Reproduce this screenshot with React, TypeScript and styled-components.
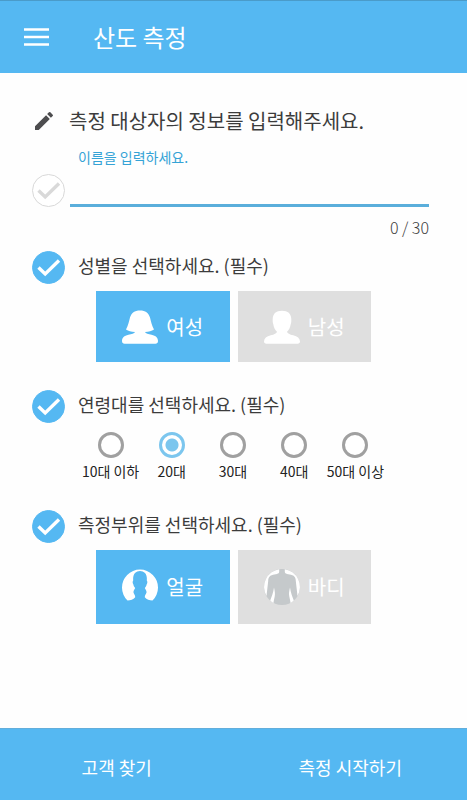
import React, { useState } from "react";
import styled, { createGlobalStyle } from "styled-components";

const BLUE = "#55b8f2";
const GREY = "#dfdfdf";

const GlobalStyle = createGlobalStyle`
  * { box-sizing: border-box; }
  body {
    margin: 0;
    background: #fefefe;
    color: #3c3c3c;
    font-family: "Noto Sans CJK KR", "Noto Sans", sans-serif;
    font-weight: 400;
  }
  button, input { font: inherit; color: inherit; }
`;

const Screen = styled.div`
  min-height: 100vh;
  display: flex;
  flex-direction: column;
`;

const AppBar = styled.header`
  height: 73px;
  display: flex;
  align-items: center;
  gap: 44px;
  padding: 0 24px;
  background: ${BLUE};
  border-top: 1px solid #4a9bc9;
  color: #fff;
`;

const MenuButton = styled.button`
  display: flex;
  padding: 0;
  border: 0;
  background: none;
  cursor: pointer;
`;

const AppTitle = styled.h1`
  margin: 0;
  font-size: 24px;
  line-height: 32px;
  font-weight: 400;
`;

const Form = styled.main`
  flex: 1;
  padding: 32px 38px 32px 32px;
`;

const Intro = styled.h2`
  display: flex;
  align-items: center;
  gap: 13px;
  margin: 0;
  font-size: 20px;
  line-height: 32px;
  font-weight: 400;
  white-space: nowrap;
`;

const PencilSlot = styled.span`
  display: flex;
  justify-content: center;
  width: 24px;
`;

const NameField = styled.div`
  display: grid;
  grid-template-columns: 33px minmax(0, 1fr);
  column-gap: 5px;
  padding-top: 8px;
`;

const NameLabel = styled.label`
  grid-column: 2;
  padding-left: 8px;
  font-size: 14px;
  line-height: 24px;
  color: #35a3d6;
`;

const NameInput = styled.input`
  width: 100%;
  height: 38px;
  padding: 0 8px;
  border: 0;
  border-bottom: 3px solid #5aaedb;
  background: none;
  outline: none;
  font-size: 18px;
`;

const NameStatus = styled.span`
  display: flex;
  align-items: flex-end;
  height: 38px;
`;

const Counter = styled.output`
  grid-column: 2;
  padding-top: 8px;
  text-align: right;
  font-size: 16px;
  font-weight: 300;
  line-height: 24px;
`;

const Section = styled.section<{ $gap: number }>`
  margin-top: ${(p) => p.$gap}px;
`;

const SectionHead = styled.div`
  display: flex;
  align-items: center;
  gap: 13px;
  height: 33px;
`;

const SectionTitle = styled.h3`
  margin: 0;
  padding-bottom: 5px;
  font-size: 18px;
  line-height: 28px;
  font-weight: 400;
  white-space: nowrap;
`;

const Choices = styled.div`
  display: grid;
  grid-template-columns: 1fr 1fr;
  gap: 8px;
  margin: 7px 58px 0 64px;
`;

const Choice = styled.button<{ $tall?: boolean }>`
  height: ${(p) => (p.$tall ? 74 : 71)}px;
  display: flex;
  align-items: center;
  justify-content: center;
  gap: 8px;
  padding: 0;
  border: 0;
  font-size: 20px;
  line-height: 32px;
  cursor: pointer;
  background: ${GREY};
  color: #fff;
  &[aria-pressed="true"] { background: ${BLUE}; }
`;

const Ages = styled.div`
  display: grid;
  grid-template-columns: repeat(5, 1fr);
  margin: 9px 43px 0 48px;
`;

const Age = styled.label`
  display: flex;
  flex-direction: column;
  align-items: center;
  gap: 1px;
  font-size: 14px;
  line-height: 24px;
  color: #222;
  white-space: nowrap;
  cursor: pointer;
`;

const Radio = styled.input`
  appearance: none;
  width: 26px;
  height: 26px;
  margin: 0;
  border: 3px solid #a0a0a0;
  border-radius: 50%;
  background: #fff;
  cursor: pointer;
  &:checked {
    border-color: #7cc6ee;
    background: radial-gradient(circle, #7cc6ee 6px, #fff 7px);
  }
`;

const BottomBar = styled.footer`
  height: 72px;
  display: grid;
  grid-template-columns: 1fr 1fr;
  background: ${BLUE};
  border-top: 1px solid #62aedb;
`;

const BottomButton = styled.button`
  padding: 5px 0 0;
  border: 0;
  background: none;
  color: #fff;
  font-size: 18px;
  line-height: 28px;
  cursor: pointer;
`;

const MenuIcon = () => (
  <svg width="25" height="18" viewBox="0 0 25 18" aria-hidden="true">
    <path d="M0 1.5h25M0 9h25M0 16.5h25" stroke="#fff" strokeWidth="2.7" />
  </svg>
);

const PencilIcon = () => (
  <svg width="24" height="24" viewBox="0 0 24 24" aria-hidden="true">
    <path
      fill="#4d4d4f"
      d="M3 17.25V21h3.75L17.81 9.94l-3.75-3.75L3 17.25zM20.71 7.04a1 1 0 0 0 0-1.41l-2.34-2.34a1 1 0 0 0-1.41 0l-1.83 1.83 3.75 3.75 1.83-1.83z"
    />
  </svg>
);

const CheckIcon = ({ done }: { done: boolean }) => (
  <svg width="33" height="33" viewBox="0 0 33 33" aria-hidden="true">
    <circle
      cx="16.5"
      cy="16.5"
      r="16"
      fill={done ? BLUE : "#fff"}
      stroke={done ? BLUE : "#d8d8d8"}
    />
    <path
      d="M6.5 16.5L13.2 23L27 9.5"
      fill="none"
      stroke={done ? "#fff" : "#d9d9d9"}
      strokeWidth="3.4"
    />
  </svg>
);

const WomanIcon = () => (
  <svg width="36" height="34" viewBox="0 0 36 34" fill="#fff" aria-hidden="true">
    <path d="M18 .5C23.5 .5 26.6 3 28 7.500C29 11.500 29.800 15.500 32 19.500C29.500 21 27 21.800 23 22C23.500 23.600 26.500 24 29.500 24.700C34 25.700 36 27.800 36 31C36 32.800 35 33.700 33.400 33.700H2.600C1 33.700 0 32.800 0 31C0 27.800 2 25.700 6.500 24.700C9.500 24 12.500 23.600 13 22C9 21.800 6.500 21 4 19.500C6.200 15.500 7 11.500 8 7.500C9.400 3 12.500 .5 18 .5z" />
  </svg>
);

const ManIcon = () => (
  <svg width="36" height="34" viewBox="0 0 36 34" fill="#fff" aria-hidden="true">
    <path d="M18 .7c6 0 9 2.700 9.300 8.300.1 2.200-.1 3.800-.6 5.300-.5 3.200-1.600 5.600-3.700 7.400.5 1.700 2.700 2.700 6.200 3.600 4.300 1.200 6.600 3 6.800 6.300 0 1.400-.9 2.100-2.400 2.100H2.400C.9 33.700 0 33 0 31.600c.2-3.300 2.500-5.100 6.800-6.300 3.500-.9 5.700-1.900 6.200-3.600-2.100-1.800-3.200-4.200-3.700-7.400-.5-1.500-.7-3.100-.6-5.300C9 3.400 12 .7 18 .7z" />
  </svg>
);

const FaceIcon = () => (
  <svg width="36" height="36" viewBox="0 0 36 36" aria-hidden="true">
    <path
      fill="#fff"
      d="M5.500 31.500A18 18 0 1 1 30.500 31.500C27.500 31.300 24.500 30.500 23 28.500C22.300 27 23.800 25.500 24.500 23.500C24.800 21.800 23.500 20.500 22.800 19C24 17.800 24.400 16.800 24.700 15.300C25.500 14.500 25.600 12.500 24.800 11.500C25 8.500 24.800 6 23 4C20.500 1.300 15.500 1.300 13 4C11.200 6 11 8.500 11.200 11.500C10.400 12.500 10.500 14.500 11.300 15.300C11.600 16.800 12 17.800 13.200 19C12.500 20.500 11.200 21.800 11.500 23.500C12.200 25.500 13.700 27 13 28.500C11.500 30.500 8.500 31.300 5.500 31.500z"
    />
  </svg>
);

const BodyIcon = () => (
  <svg width="36" height="36" viewBox="0 0 36 36" aria-hidden="true">
    <circle cx="18" cy="18" r="18" fill="#c5c9cb" />
    <g fill="#fff">
      <path d="M15.200 .2v2.600c0 1.200-.8 1.800-2.200 2.100l-4 .9C5.500 6.700 4.300 8.500 4.200 12L2.500 27A18 18 0 0 1 15.200 .2z" />
      <path d="M20.800 .2v2.600c0 1.200.8 1.800 2.200 2.100l4 .9c3.500.9 4.700 2.700 4.800 6.200L33.500 27A18 18 0 0 0 20.800 .2z" />
      <path d="M10 18.500c.8 3.500 1.300 6 .7 9-.3 2-1 4.200-1.300 6.400-1.500-.8-2.300-1.500-3.200-2.300 1-3 3.200-7.800 3.800-13.100z" />
      <path d="M26 18.500c-.8 3.500-1.300 6-.7 9 .3 2 1 4.200 1.300 6.400 1.500-.8 2.300-1.500 3.200-2.300-1-3-3.200-7.800-3.800-13.100z" />
    </g>
  </svg>
);

const AGES = ["10대 이하", "20대", "30대", "40대", "50대 이상"];
const MAX_NAME = 30;

export default function App() {
  const [name, setName] = useState("");
  const [gender, setGender] = useState("female");
  const [age, setAge] = useState("20대");
  const [part, setPart] = useState("face");

  return (
    <Screen>
      <GlobalStyle />
      <AppBar>
        <MenuButton type="button" aria-label="메뉴">
          <MenuIcon />
        </MenuButton>
        <AppTitle>산도 측정</AppTitle>
      </AppBar>

      <Form>
        <Intro>
          <PencilSlot>
            <PencilIcon />
          </PencilSlot>
          측정 대상자의 정보를 입력해주세요.
        </Intro>

        <NameField>
          <NameLabel htmlFor="name">이름을 입력하세요.</NameLabel>
          <NameStatus>
            <CheckIcon done={name.length > 0} />
          </NameStatus>
          <NameInput
            id="name"
            type="text"
            maxLength={MAX_NAME}
            value={name}
            onChange={(e) => setName(e.target.value)}
          />
          <Counter htmlFor="name">{`${name.length} / ${MAX_NAME}`}</Counter>
        </NameField>

        <Section $gap={12}>
          <SectionHead>
            <CheckIcon done />
            <SectionTitle id="gender">성별을 선택하세요. (필수)</SectionTitle>
          </SectionHead>
          <Choices role="group" aria-labelledby="gender">
            <Choice type="button" aria-pressed={gender === "female"} onClick={() => setGender("female")}>
              <WomanIcon />
              여성
            </Choice>
            <Choice type="button" aria-pressed={gender === "male"} onClick={() => setGender("male")}>
              <ManIcon />
              남성
            </Choice>
          </Choices>
        </Section>

        <Section $gap={28}>
          <SectionHead>
            <CheckIcon done />
            <SectionTitle id="age">연령대를 선택하세요. (필수)</SectionTitle>
          </SectionHead>
          <Ages role="radiogroup" aria-labelledby="age">
            {AGES.map((a) => (
              <Age key={a}>
                <Radio type="radio" name="age" checked={age === a} onChange={() => setAge(a)} />
                {a}
              </Age>
            ))}
          </Ages>
        </Section>

        <Section $gap={27}>
          <SectionHead>
            <CheckIcon done />
            <SectionTitle id="part">측정부위를 선택하세요. (필수)</SectionTitle>
          </SectionHead>
          <Choices role="group" aria-labelledby="part">
            <Choice $tall type="button" aria-pressed={part === "face"} onClick={() => setPart("face")}>
              <FaceIcon />
              얼굴
            </Choice>
            <Choice $tall type="button" aria-pressed={part === "body"} onClick={() => setPart("body")}>
              <BodyIcon />
              바디
            </Choice>
          </Choices>
        </Section>
      </Form>

      <BottomBar>
        <BottomButton type="button">고객 찾기</BottomButton>
        <BottomButton type="button">측정 시작하기</BottomButton>
      </BottomBar>
    </Screen>
  );
}
